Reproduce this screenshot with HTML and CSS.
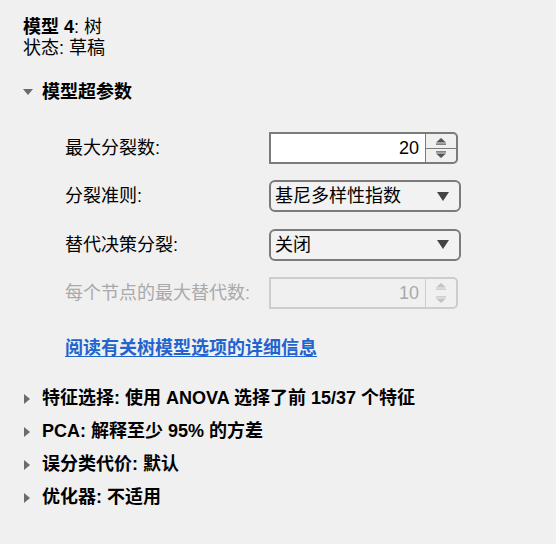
FILE: index.html
```html
<!DOCTYPE html>
<html lang="zh-CN">
<head>
<meta charset="utf-8">
<link rel="stylesheet" href="styles.css">
</head>
<body>
<div class="panel">
  <div class="title"><b>模型 4</b>: 树</div>
  <div class="title">状态: 草稿</div>

  <div class="section open">
    <svg class="tri-down" width="10" height="6" viewBox="0 0 10 6"><path d="M0 0H10L5 6Z" fill="#6b6b6b"/></svg>
    <span class="sec-title">模型超参数</span>
  </div>

  <div class="form">
    <div class="label">最大分裂数:</div>
    <div class="spinner">
      <div class="spin-field">20</div>
      <div class="spin-btns">
        <div class="spin-btn"><svg width="12" height="8" viewBox="0 0 12 8"><path d="M1 5.5L6 1L11 5.5Z" fill="#555"/><rect x="1" y="6.5" width="10" height="1.2" fill="#555"/></svg></div>
        <div class="spin-btn"><svg width="12" height="8" viewBox="0 0 12 8"><rect x="1" y="0.3" width="10" height="1.2" fill="#555"/><path d="M1 2.5L11 2.5L6 7Z" fill="#555"/></svg></div>
      </div>
    </div>

    <div class="label">分裂准则:</div>
    <div class="dropdown"><span>基尼多样性指数</span><svg width="12" height="9" viewBox="0 0 12 9"><path d="M0 0H12L6 9Z" fill="#444"/></svg></div>

    <div class="label">替代决策分裂:</div>
    <div class="dropdown"><span>关闭</span><svg width="12" height="9" viewBox="0 0 12 9"><path d="M0 0H12L6 9Z" fill="#444"/></svg></div>

    <div class="label disabled">每个节点的最大替代数:</div>
    <div class="spinner off">
      <div class="spin-field">10</div>
      <div class="spin-btns">
        <div class="spin-btn"><svg width="12" height="8" viewBox="0 0 12 8"><path d="M1 5.5L6 1L11 5.5Z" fill="#c4c4c4"/><rect x="1" y="6.5" width="10" height="1.2" fill="#c4c4c4"/></svg></div>
        <div class="spin-btn"><svg width="12" height="8" viewBox="0 0 12 8"><rect x="1" y="0.3" width="10" height="1.2" fill="#c4c4c4"/><path d="M1 2.5L11 2.5L6 7Z" fill="#c4c4c4"/></svg></div>
      </div>
    </div>
  </div>

  <a class="link" href="#">阅读有关树模型选项的详细信息</a>

  <div class="sections">
    <div class="section closed">
      <svg class="tri-right" width="7" height="10" viewBox="0 0 7 10"><path d="M0 0V10L6 5Z" fill="#6b6b6b"/></svg>
      <span class="sec-title">特征选择: 使用 ANOVA 选择了前 15/37 个特征</span>
    </div>
    <div class="section closed">
      <svg class="tri-right" width="7" height="10" viewBox="0 0 7 10"><path d="M0 0V10L6 5Z" fill="#6b6b6b"/></svg>
      <span class="sec-title">PCA: 解释至少 95% 的方差</span>
    </div>
    <div class="section closed">
      <svg class="tri-right" width="7" height="10" viewBox="0 0 7 10"><path d="M0 0V10L6 5Z" fill="#6b6b6b"/></svg>
      <span class="sec-title">误分类代价: 默认</span>
    </div>
    <div class="section closed">
      <svg class="tri-right" width="7" height="10" viewBox="0 0 7 10"><path d="M0 0V10L6 5Z" fill="#6b6b6b"/></svg>
      <span class="sec-title">优化器: 不适用</span>
    </div>
  </div>
</div>
</body>
</html>
```

FILE: styles.css
```css
html, body {
  margin: 0;
  padding: 0;
  background: #f0f0f0;
}
body {
  width: 556px;
  height: 544px;
  overflow: hidden;
  font-family: "Liberation Sans", "Noto Sans CJK SC", sans-serif;
  font-size: 18px;
  color: #000;
}
.panel {
  padding: 17px 0 0 23px;
}
.title {
  line-height: 21px;
  height: 21px;
}
.title b {
  font-weight: bold;
}
.section {
  display: flex;
  align-items: center;
  height: 24px;
  line-height: 24px;
}
.section.open {
  margin-top: 21px;
}
.tri-down {
  margin-left: 0;
  margin-right: 9px;
}
.tri-right {
  margin-left: 1px;
  margin-right: 11px;
}
.sec-title {
  font-weight: bold;
  white-space: nowrap;
}
.form {
  display: grid;
  grid-template-columns: 204px 192px;
  grid-auto-rows: 32px;
  row-gap: 16.4px;
  align-items: center;
  margin: 28px 0 0 42px;
}
.label {
  line-height: 24px;
}
.label.disabled {
  color: #a9a9a9;
}
.spinner {
  display: flex;
  width: 189px;
  height: 32px;
  box-sizing: border-box;
  border: 2px solid #7b7b7b;
  border-radius: 0 5px 5px 0;
}
.spin-field {
  flex: 1;
  background: #fff;
  text-align: right;
  padding-right: 6px;
  line-height: 28px;
  border-right: 1.5px solid #7b7b7b;
}
.spin-btns {
  width: 30px;
  display: flex;
  flex-direction: column;
}
.spin-btn {
  flex: 1;
  display: flex;
  align-items: center;
  justify-content: center;
}
.spin-btn:first-child {
  border-bottom: 1.5px solid #7b7b7b;
}
.spinner.off {
  border-color: #cdcdcd;
}
.spinner.off .spin-field {
  background: #f0f0f0;
  color: #a9a9a9;
  border-right-color: #cdcdcd;
}
.spinner.off .spin-btn:first-child {
  border-bottom: none;
}
.dropdown {
  display: flex;
  align-items: center;
  justify-content: space-between;
  height: 32px;
  box-sizing: border-box;
  border: 2px solid #7b7b7b;
  border-radius: 6px;
  background: #f2f2f2;
  padding: 0 10px 0 4px;
  line-height: 28px;
}
.link {
  display: block;
  margin: 27px 0 0 42px;
  width: max-content;
  line-height: 24px;
  color: #2264cf;
  font-weight: bold;
  text-decoration: underline;
  text-underline-offset: 2px;
}
.sections {
  margin-top: 22px;
}
.section.closed {
  height: 33px;
  line-height: 33px;
}
```
